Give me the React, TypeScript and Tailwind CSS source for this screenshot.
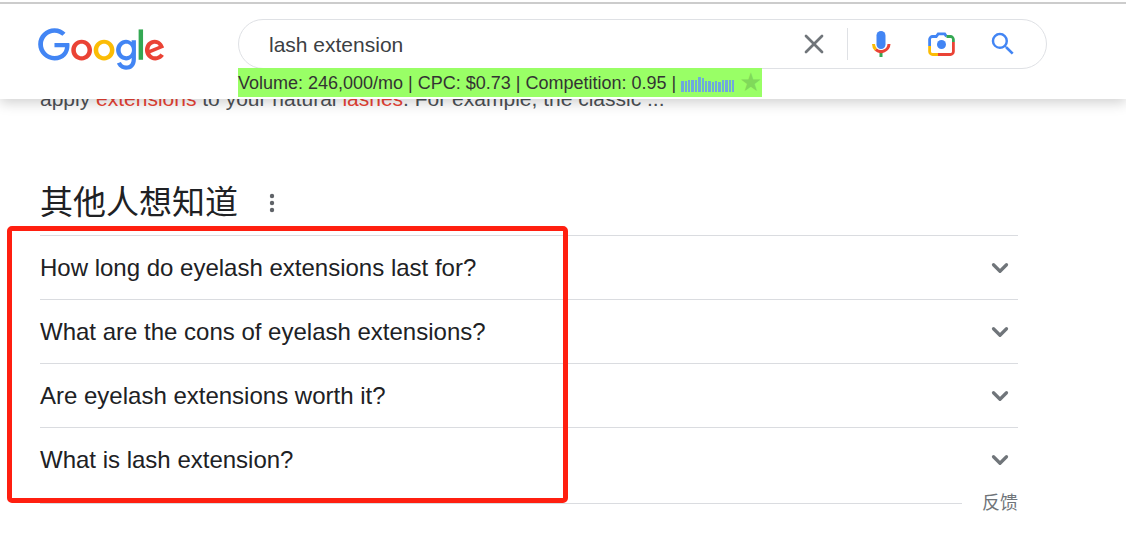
import { ChevronDown, X } from "lucide-react";

const questions = [
  "How long do eyelash extensions last for?",
  "What are the cons of eyelash extensions?",
  "Are eyelash extensions worth it?",
  "What is lash extension?",
];

const trend = [11, 11, 12, 12, 12, 15, 14, 11, 11, 10, 11, 10, 12, 12, 12, 12];

function GoogleLogo() {
  return (
    <svg viewBox="0 0 272 92" className="w-[127px] h-[43px] shrink-0">
      <path fill="#EA4335" d="M115.75 47.18c0 12.77-9.99 22.18-22.25 22.18s-22.25-9.41-22.25-22.18C71.25 34.32 81.24 25 93.5 25s22.25 9.32 22.25 22.18zm-9.74 0c0-7.98-5.79-13.44-12.51-13.44S80.99 39.2 80.99 47.18c0 7.9 5.79 13.44 12.51 13.44s12.51-5.55 12.51-13.44z" />
      <path fill="#FBBC05" d="M163.75 47.18c0 12.77-9.99 22.18-22.25 22.18s-22.25-9.41-22.25-22.18c0-12.85 9.99-22.18 22.25-22.18s22.25 9.32 22.25 22.18zm-9.74 0c0-7.98-5.79-13.44-12.51-13.44s-12.51 5.46-12.51 13.44c0 7.9 5.79 13.44 12.51 13.44s12.51-5.55 12.51-13.44z" />
      <path fill="#4285F4" d="M209.75 26.34v39.82c0 16.38-9.66 23.07-21.08 23.07-10.75 0-17.22-7.19-19.66-13.07l8.48-3.53c1.51 3.61 5.21 7.87 11.17 7.87 7.31 0 11.84-4.51 11.84-13v-3.19h-.34c-2.18 2.69-6.38 5.04-11.68 5.04-11.09 0-21.25-9.66-21.25-22.09 0-12.52 10.16-22.26 21.25-22.26 5.29 0 9.49 2.35 11.68 4.96h.34v-3.61h9.25zm-8.56 20.92c0-7.81-5.21-13.52-11.84-13.52-6.72 0-12.35 5.71-12.35 13.52 0 7.73 5.63 13.36 12.35 13.36 6.63 0 11.84-5.63 11.84-13.36z" />
      <path fill="#34A853" d="M225 3v65h-9.5V3h9.5z" />
      <path fill="#EA4335" d="M262.02 54.48l7.56 5.04c-2.44 3.61-8.32 9.83-18.48 9.83-12.6 0-22.01-9.74-22.01-22.18 0-13.19 9.49-22.18 20.92-22.18 11.51 0 17.14 9.16 18.98 14.11l1.01 2.52-29.65 12.28c2.27 4.45 5.8 6.72 10.75 6.72 4.96 0 8.4-2.44 10.92-6.14zm-23.27-7.98l19.82-8.23c-1.09-2.77-4.37-4.7-8.23-4.7-4.95 0-11.84 4.37-11.59 12.93z" />
      <path fill="#4285F4" d="M35.29 41.41V32H67c.31 1.64.47 3.58.47 5.68 0 7.06-1.93 15.79-8.15 22.01-6.05 6.3-13.78 9.66-24.02 9.66C16.32 69.35.36 53.89.36 34.91.36 15.93 16.32.47 35.3.47c10.5 0 17.98 4.12 23.6 9.49l-6.64 6.64c-4.03-3.78-9.49-6.72-16.97-6.72-13.86 0-24.7 11.17-24.7 25.03 0 13.86 10.84 25.03 24.7 25.03 8.99 0 14.11-3.61 17.39-6.89 2.66-2.66 4.41-6.46 5.1-11.65l-22.49.01z" />
    </svg>
  );
}

function MicIcon() {
  return (
    <svg viewBox="0 0 24 32" className="w-[24px] h-[32px]">
      <rect fill="#34A853" x="10.5" y="24" width="3" height="5" />
      <path fill="none" stroke="#FBBC05" strokeWidth="3" d="M4.5 16a8 8 0 0 0 2.3 5.6" />
      <path fill="none" stroke="#EA4335" strokeWidth="3" d="M6.8 21.6A8 8 0 0 0 20 16" />
      <rect fill="#4285F4" x="7.5" y="3" width="9" height="18" rx="4.5" />
    </svg>
  );
}

function LensIcon() {
  return (
    <svg viewBox="0 0 27 24" className="w-[27px] h-[24px]">
      <circle fill="#4285F4" cx="13.5" cy="12.5" r="4.5" />
      <path fill="none" stroke="#4285F4" strokeWidth="2.8" d="M1.6 14V7.5a3 3 0 0 1 3-3h3.6l2-2.6h6.5l1.8 2.6" />
      <path fill="none" stroke="#34A853" strokeWidth="2.8" d="M18.5 4.5h3.9a3 3 0 0 1 3 3V10" />
      <path fill="none" stroke="#EA4335" strokeWidth="2.8" d="M25.4 10v9.5a3 3 0 0 1-3 3H10" />
      <path fill="none" stroke="#FBBC05" strokeWidth="2.8" d="M10 22.5H4.6a3 3 0 0 1-3-3V14" />
    </svg>
  );
}

function SearchIcon() {
  return (
    <svg viewBox="0 0 24 24" className="w-[30px] h-[30px]">
      <path fill="#4285F4" d="M15.5 14h-.79l-.28-.27A6.47 6.47 0 0 0 16 9.5 6.5 6.5 0 1 0 9.5 16c1.61 0 3.09-.59 4.23-1.57l.27.28v.79l5 4.99L20.49 19l-4.99-5zm-6 0C7.01 14 5 11.99 5 9.5S7.01 5 9.5 5 14 7.01 14 9.5 11.99 14 9.5 14z" />
    </svg>
  );
}

function Sparkline() {
  return (
    <span className="ml-[5px] mt-[3px] flex h-[15px] items-end gap-px">
      {trend.map((h, i) => (
        <span key={i} className="w-[2.375px] bg-[#6fa8dc]" style={{ height: h }} />
      ))}
    </span>
  );
}

export default function App() {
  return (
    <div className="relative h-[542px] overflow-hidden bg-white font-['Liberation_Sans','Noto_Sans_CJK_SC',sans-serif] text-[#202124]">
      {/* Sticky header */}
      <header className="absolute inset-x-0 top-0 z-10 h-[99px] bg-white shadow-[0_4px_12px_rgba(0,0,0,0.18)]">
        <div className="mt-[2px] h-[2px] bg-[#cccccc]" />
        <div className="flex items-start pt-[15px] pl-[38px]">
          <div className="mt-[9px] w-[200px] shrink-0">
            <GoogleLogo />
          </div>
          <div className="w-[809px]">
            <div className="flex h-[50px] items-center rounded-[25px] border border-[#dfe1e5] pl-[30px] pr-[28px]">
              <span className="flex-1 pt-px text-[21px] text-[#3c4043]">lash extension</span>
              <X className="mr-[17px] h-[32px] w-[32px] text-[#70757a]" strokeWidth={2} />
              <div className="mr-[21px] h-[32px] w-px bg-[#dfe1e5]" />
              <div className="mr-[35px] flex"><MicIcon /></div>
              <div className="mr-[33px] flex"><LensIcon /></div>
              <SearchIcon />
            </div>
            <div className="-mt-px flex h-[29px] w-[524px] items-center bg-[#99ff66] text-[18px] text-[#333333]">
              <span className="pt-[2px]">Volume: 246,000/mo | CPC: $0.73 | Competition: 0.95 |</span>
              <Sparkline />
              <span className="-mt-[3px] ml-[6px] text-[21px] leading-none text-[#80d95a]">★</span>
            </div>
          </div>
        </div>
      </header>

      <main className="ml-[40px] w-[978px] pt-[87px]">
        <p className="text-[21px] leading-[24px] text-[#4d5156]">
          apply <span className="text-[#ea4335]">extensions</span> to your natural{" "}
          <span className="text-[#ea4335]">lashes</span>. For example, the classic ...
        </p>

        <div className="mt-[69px] flex h-[46px] items-center">
          <h2 className="text-[33px] leading-[40px]">其他人想知道</h2>
          <svg viewBox="0 0 24 24" className="ml-[22px] h-[24px] w-[24px]" fill="#5f6368">
            <circle cx="12" cy="5" r="2.2" />
            <circle cx="12" cy="12" r="2.2" />
            <circle cx="12" cy="19" r="2.2" />
          </svg>
        </div>

        <div className="mt-[9px]">
          {questions.map((q) => (
            <div key={q} className="flex h-[64px] items-center justify-between border-t border-[#dadce0]">
              <span className="text-[24px]">{q}</span>
              <ChevronDown className="mr-[5px] mt-px h-[26px] w-[26px] text-[#70757a]" strokeWidth={3} />
            </div>
          ))}
        </div>

        <div className="-mt-px flex items-center">
          <div className="h-px flex-1 bg-[#dadce0]" />
          <span className="ml-[20px] text-[18px] text-[#70757a]">反馈</span>
        </div>
      </main>

      {/* Hand-drawn annotation over the screenshot */}
      <div className="absolute left-[7px] top-[226px] h-[277px] w-[561px] rounded-[5px] border-[5px] border-[#ff1f10]" />
    </div>
  );
}
